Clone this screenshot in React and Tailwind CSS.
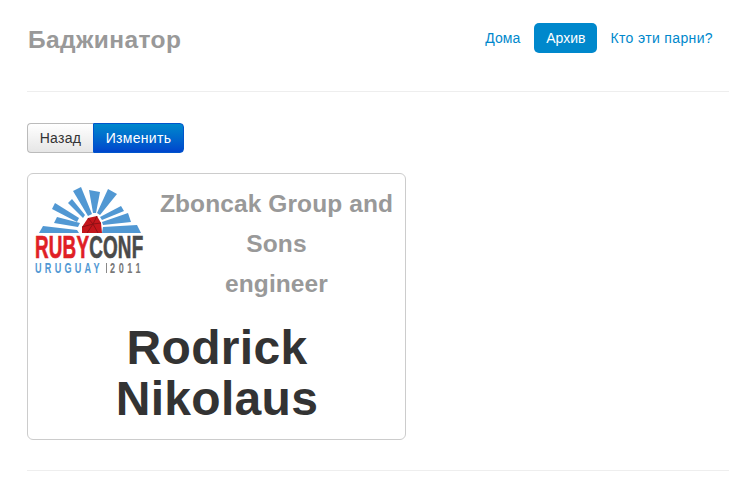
const font = { fontFamily: '"Liberation Sans", Arial, sans-serif' };

function RubyConfLogo() {
  return (
    <svg width="115" height="92" viewBox="0 0 115 92" className="block shrink-0">
      <g fill="#5198d3">
        <path d="M6 48 L10 41 L44 45 L46 48 Z" />
        <path d="M24 32 L21 38 L45 42 L47 38 Z" />
        <path d="M22 18 L19 24 L44 37 L46 33 Z" />
        <path d="M39 14 L35 18 L50 33 L52 30 Z" />
        <path d="M48 2 L40 6 L55 31 L59 29 Z" />
        <path d="M56 5 L67 7 L63 28 L60 28 Z" />
        <path d="M75 4 L84 9 L67 30 L64 28 Z" />
        <path d="M88 21 L91 26 L69 35 L67 32 Z" />
        <path d="M95 28 L98 37 L70 40 L69 37 Z" />
        <path d="M70 42 L104 40 L108 48 L69 48 Z" />
      </g>
      <path d="M49 42 L55 33 L64 31 L68 38 L69 48 L49 48 Z" fill="#c4161c" />
      <path d="M55 33 L60 39 L64 31 M60 39 L49 42 M60 39 L68 38 M60 39 L54 48 M60 39 L65 48" stroke="#8f1015" strokeWidth="1" fill="none" />
      <text transform="translate(2 73) scale(.59 1)" fontFamily="Liberation Sans" fontWeight="700" fontSize="32" strokeWidth="0.7">
        <tspan fill="#e01f26" stroke="#e01f26">RUBY</tspan>
        <tspan fill="#4a4a4a" stroke="#4a4a4a">CONF</tspan>
      </text>
      <text transform="translate(2 88) scale(.65 1)" fontFamily="Liberation Sans" fontWeight="700" fontSize="14" letterSpacing="5" fill="#5198d3">URUGUAY</text>
      <rect x="73" y="78" width="1" height="10" fill="#888888" />
      <text transform="translate(77 88) scale(.65 1)" fontFamily="Liberation Sans" fontWeight="700" fontSize="14" letterSpacing="5.5" fill="#777777">2011</text>
    </svg>
  );
}

export default function App() {
  return (
    <div style={font} className="w-[756px] h-[489px] overflow-hidden bg-white px-[27px] text-[14px] text-[#333] tracking-[0.3px]">
      <header className="h-[92px] border-b border-[#eeeeee] flex items-start justify-between pt-[23px]">
        <h3 className="ml-[1px] text-[24.5px] leading-[34px] font-bold text-[#999999] tracking-[0.4px] m-0">Баджинатор</h3>
        <nav className="flex items-center gap-[2px] pr-[4px] text-[#0088cc] leading-[20px]">
          <a className="px-[12px] py-[5px] rounded-[5px] tracking-normal">Дома</a>
          <a className="px-[12px] py-[5px] rounded-[5px] bg-[#0088cc] text-white tracking-normal">Архив</a>
          <a className="-ml-[1px] px-[12px] py-[5px] rounded-[5px] tracking-[0.36px]">Кто эти парни?</a>
        </nav>
      </header>

      <div className="flex mt-[31px] h-[30px]">
        <button className="h-full w-[66px] text-center rounded-l-[4px] border border-[#bbbbbb] border-r-0 bg-gradient-to-b from-white to-[#e6e6e6] text-[#333] leading-[20px]">
          Назад
        </button>
        <button className="h-full w-[91px] text-center rounded-r-[4px] border border-[#0055cc] bg-gradient-to-b from-[#0088cc] to-[#0044cc] text-white leading-[20px]">
          Изменить
        </button>
      </div>

      <div className="mt-[20px] w-[379px] h-[267px] border border-[#cccccc] rounded-[6px] pt-[11px] pl-[5px] pr-[4px]">
        <div className="flex gap-[4px]">
          <RubyConfLogo />
          <div className="flex-1 text-center text-[24.5px] leading-[40px] font-bold text-[#999999] tracking-[0.1px] -mt-[1px]">
            Zboncak Group and Sons
            <br />
            engineer
          </div>
        </div>
        <div className="mt-[18px] text-center pl-[7px] pr-[7px] text-[48px] leading-[51px] font-bold text-[#333333]">
          Rodrick
          <br />
          Nikolaus
        </div>
      </div>

      <div className="mt-[30px] border-t border-[#eeeeee]" />
    </div>
  );
}
